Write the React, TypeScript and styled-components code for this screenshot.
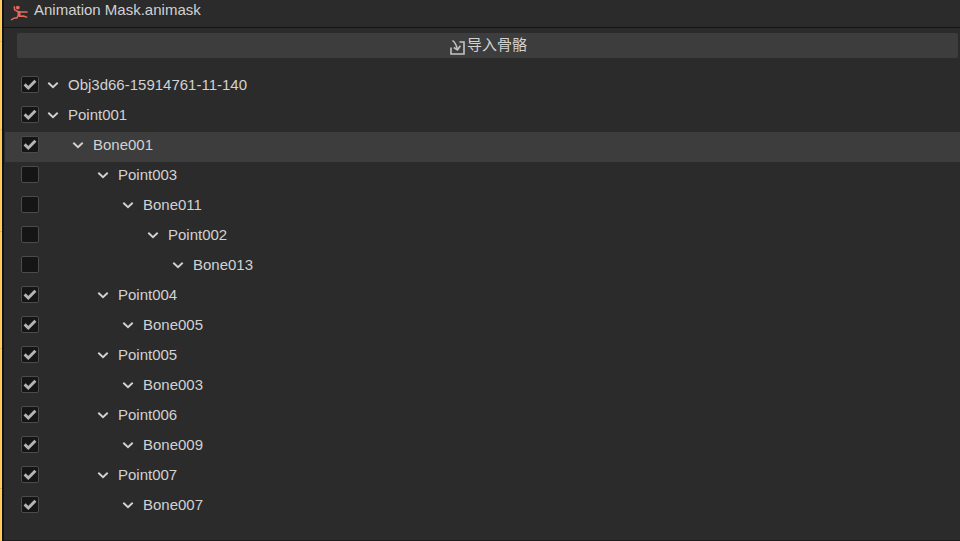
import React, { useState } from "react";
import styled, { createGlobalStyle } from "styled-components";

const GlobalStyle = createGlobalStyle`
  * {
    box-sizing: border-box;
  }
  html,
  body,
  #root {
    height: 100%;
  }
  body {
    margin: 0;
    overflow: hidden;
    background: #2b2b2b;
    color: #d2d2d2;
    font-family: "Liberation Sans", "Noto Sans CJK SC", sans-serif;
    font-size: 15px;
  }
`;

const Frame = styled.div`
  display: flex;
  min-height: 100%;
`;

const tick = (y: number) =>
  `linear-gradient(#d9b55f, #d9b55f) 0 ${y}px / 2px 1px no-repeat`;

const EdgeStrip = styled.div`
  flex: none;
  width: 4px;
  background: ${[41, 129, 231, 348, 488].map(tick).join(", ")}, #ffcc5c;
  border-right: 2px solid #111111;
`;

const Panel = styled.main`
  flex: 1;
  min-width: 0;
  border-bottom: 1px solid #1c1c1c;
`;

const Header = styled.header`
  display: flex;
  align-items: flex-start;
  gap: 5px;
  height: 28px;
  padding: 1px 6px 0;
  border-bottom: 1px solid #141414;
`;

const Title = styled.h1`
  margin: 0;
  font-size: 15px;
  font-weight: 400;
  line-height: 18px;
`;

const RunnerIcon = styled.svg`
  flex: none;
  width: 19px;
  height: 20px;
  margin-top: 2px;
`;

const Toolbar = styled.div`
  display: flex;
  padding: 5px 2px 14px 13px;
`;

const ImportButton = styled.button`
  display: flex;
  flex: 1;
  align-items: center;
  justify-content: center;
  gap: 2px;
  height: 25px;
  padding: 0 0 2px 2px;
  border: 0;
  border-radius: 2px;
  background: #3d3d3d;
  color: #d2d2d2;
  font: inherit;
  line-height: 22px;
`;

const ImportIcon = styled.svg`
  width: 15px;
  height: 16px;
  margin-top: 4px;
`;

const Tree = styled.ul`
  margin: 0;
  padding: 0 0 0 1px;
  list-style: none;
`;

const Row = styled.li<{ $selected: boolean }>`
  display: flex;
  align-items: center;
  height: 30px;
  padding: 0 16px 4px;
  background: ${(p) => (p.$selected ? "#3d3d3d" : "transparent")};
`;

const CheckBox = styled.span`
  display: grid;
  flex: none;
  width: 18px;
  height: 18px;

  > * {
    grid-area: 1 / 1;
  }
`;

const CheckInput = styled.input`
  width: 18px;
  height: 17px;
  margin: 0;
  appearance: none;
  border: 1px solid #4b4b4b;
  border-radius: 2px;
  background: #151515;

  &:not(:checked) + svg {
    visibility: hidden;
  }
`;

const CheckMark = styled.svg`
  width: 18px;
  height: 18px;
  pointer-events: none;
`;

const Toggle = styled.button<{ $depth: number }>`
  display: flex;
  flex: none;
  width: 12px;
  height: 18px;
  margin: 0 9px 0 ${(p) => 8 + p.$depth * 25}px;
  padding: 0;
  align-items: center;
  border: 0;
  background: none;
  color: #d2d2d2;
`;

const Label = styled.label`
  line-height: 18px;
  white-space: nowrap;
`;

type Bone = { name: string; depth: number; checked: boolean; selected?: boolean };

const bones: Bone[] = [
  { name: "Obj3d66-15914761-11-140", depth: 0, checked: true },
  { name: "Point001", depth: 0, checked: true },
  { name: "Bone001", depth: 1, checked: true, selected: true },
  { name: "Point003", depth: 2, checked: false },
  { name: "Bone011", depth: 3, checked: false },
  { name: "Point002", depth: 4, checked: false },
  { name: "Bone013", depth: 5, checked: false },
  { name: "Point004", depth: 2, checked: true },
  { name: "Bone005", depth: 3, checked: true },
  { name: "Point005", depth: 2, checked: true },
  { name: "Bone003", depth: 3, checked: true },
  { name: "Point006", depth: 2, checked: true },
  { name: "Bone009", depth: 3, checked: true },
  { name: "Point007", depth: 2, checked: true },
  { name: "Bone007", depth: 3, checked: true },
];

function BoneRow({ bone }: { bone: Bone }) {
  const [checked, setChecked] = useState(bone.checked);
  const id = `bone-${bone.name}`;
  return (
    <Row $selected={Boolean(bone.selected)}>
      <CheckBox>
        <CheckInput
          id={id}
          type="checkbox"
          checked={checked}
          onChange={(e) => setChecked(e.target.checked)}
        />
        <CheckMark viewBox="0 0 18 18" fill="none" stroke="#b4b4b4" strokeWidth="3">
          <path d="M3.6 8.4 7.3 12 14.400 4.8" />
        </CheckMark>
      </CheckBox>
      <Toggle type="button" $depth={bone.depth} aria-label={`Collapse ${bone.name}`}>
        <svg width="12" height="8" viewBox="0 0 12 8" fill="none" stroke="currentColor" strokeWidth="1.9">
          <path d="M1.300 1.800 6 6.200 10.700 1.800" />
        </svg>
      </Toggle>
      <Label htmlFor={id}>{bone.name}</Label>
    </Row>
  );
}

export default function App() {
  return (
    <>
      <GlobalStyle />
      <Frame>
        <EdgeStrip />
        <Panel>
          <Header>
            <RunnerIcon viewBox="0 0 19 20" fill="none" stroke="#e8695c" strokeWidth="1.5" aria-hidden="true">
              <circle cx="7.8" cy="4.600" r="1.900" fill="#e8695c" stroke="none" />
              <path d="M4.300 3.200 4.600 6.800 8.500 8.900H17.600" />
              <path d="M9 8.200V13" strokeWidth="3" />
              <path d="M8.600 12.400 6.800 15 4.600 14.900 1 16.800" />
              <path d="M9 13.200 13.500 13 17.200 14.400" />
            </RunnerIcon>
            <Title>Animation Mask.animask</Title>
          </Header>
          <Toolbar>
            <ImportButton type="button">
              <ImportIcon viewBox="0 0 15 16" fill="none" stroke="#c4c4c4" strokeWidth="1.6" aria-hidden="true">
                <path d="M1 8.500V15H14V3H9.500" />
                <path d="M2.500 1.500C5 3.500 6.600 6 7.300 10.500" />
                <path d="M3.800 8.500 7.500 11 10.300 6.800" />
              </ImportIcon>
              导入骨骼
            </ImportButton>
          </Toolbar>
          <Tree>
            {bones.map((bone) => (
              <BoneRow key={bone.name} bone={bone} />
            ))}
          </Tree>
        </Panel>
      </Frame>
    </>
  );
}
